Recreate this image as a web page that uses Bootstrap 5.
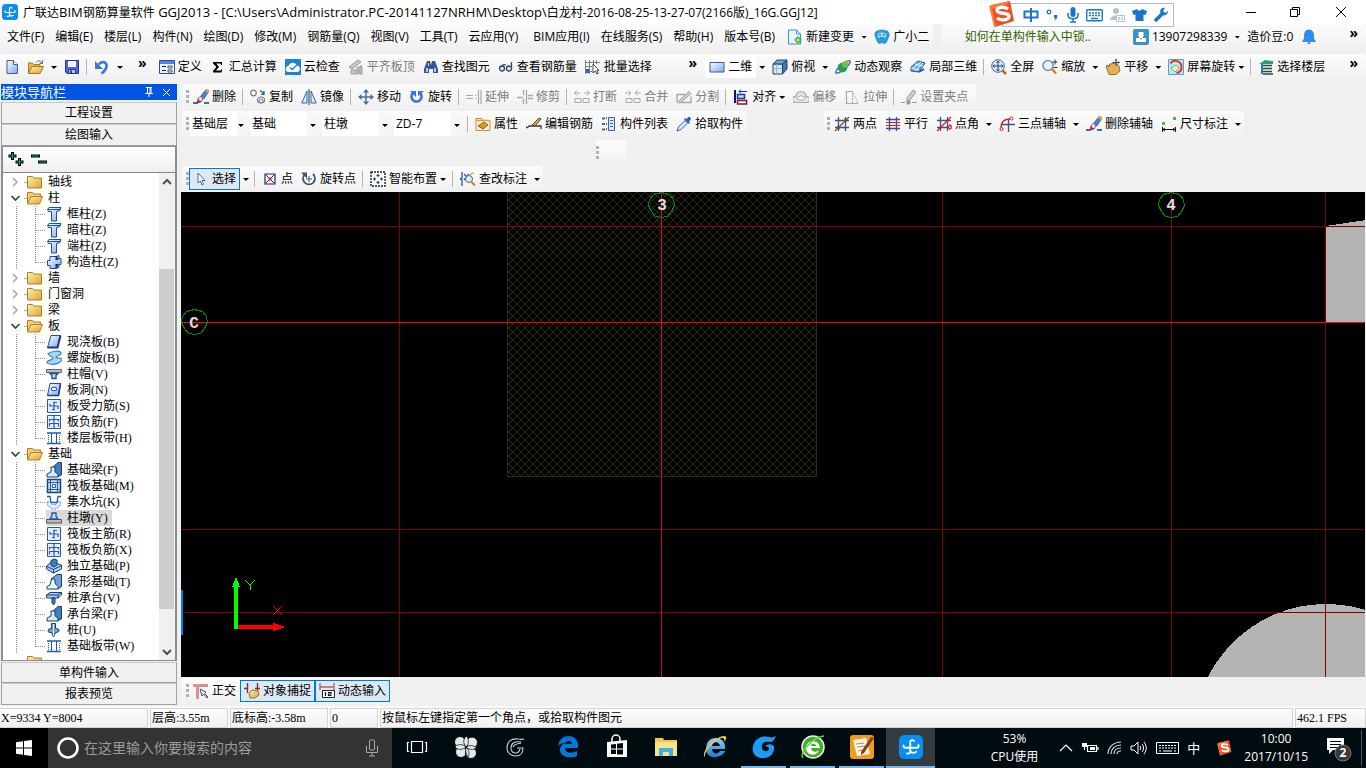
<!DOCTYPE html>
<html lang="zh-CN">
<head>
<meta charset="utf-8">
<meta name="viewport" content="width=device-width, initial-scale=1">
<title>广联达BIM钢筋算量软件 GGJ2013</title>
<link href="https://cdn.jsdelivr.net/npm/bootstrap@5.3.0/dist/css/bootstrap.min.css" rel="stylesheet">
<style>
  body { font: 12px/16px "Open Sans", "Noto Sans CJK SC", sans-serif; color: #000; background: #f0f0f0; }
  button, select, input { font: inherit; color: inherit; }
  a { color: inherit; text-decoration: none; }
  svg { flex: none; display: block; }
  .ic { width: 16px; height: 16px; }
  .titlebar { height: 24px; background: #fff; padding-left: 2px; gap: 5px; }
  .caption { font-size: 13px; }
  .caption .han, .caption .path { font-size: 12px; }
  .winbtn { width: 46px; height: 24px; border: 0; background: none; padding: 0; }
  .ime { top: 3px; right: 192px; width: 172px; height: 24px; background: #fff; border: 1px solid #a9bcd8; padding: 0 4px 0 20px; z-index: 5; }
  .ime-logo { left: -16px; top: -4px; }
  .menurow { height: 31px; }
  .menus { gap: 11px; padding-left: 7px; }
  .strip { height: 26px; background: linear-gradient(#fcfcfc, #f0f0f0); border-radius: 3px 3px 0 0; }
  .strip.side { padding-left: 4px; }
  .tb { border: 0; background: none; padding: 0 4px; height: 22px; display: inline-flex; align-items: center; gap: 3px; white-space: nowrap; }
  .tb:disabled { color: #7d7d7d; }
  .tb.on { background: #dce9f5; border: 1px solid #0078d7; padding: 0 3px; }
  .dd { width: 12px; padding: 0; justify-content: center; }
  .tri { width: 6px; height: 3px; background: #000; clip-path: polygon(0 0, 100% 0, 50% 100%); flex: none; }
  .vr1 { width: 1px; height: 16px; margin: 0 3px 0 2px; background: #b4b4b4; flex: none; }
  .grip { width: 3px; height: 14px; background: repeating-linear-gradient(#b0b0b0 0 3px, transparent 3px 5px); flex: none; }
  .more { border: 0; background: none; padding: 0 8px 8px 4px; font-size: 14px; font-weight: 700; line-height: 14px; }
  .combo { appearance: none; border: 0; border-radius: 0; height: 23px; width: 69px; padding: 0 2px; background: linear-gradient(90deg, #fff 83%, #f6f6f6 83%); }
  .combo.first { width: 57px; }
  .combo-wrap { margin-left: 3px; position: relative; }
  .combo-wrap.lead0 { margin-left: 1px; }
  .combo-wrap .tri { position: absolute; right: 3px; top: 11px; pointer-events: none; }
  .row-combo { margin-top: 1px; max-width: 1062px; }
  .row-combo .strip:last-child { padding-left: 3px; }
  .row-blank { margin-top: 3px; padding-left: 35%; }
  .row-blank .strip { width: 31px; }
  .row-snap { padding: 1px 0 2px 1px; }
  .dock { width: 178px; padding: 0 1px; }
  .dock-head { height: 16px; background: #0055e5; color: #fff; font-size: 13px; line-height: 16px; margin-bottom: 2px; }
  .dock-head button { border: 0; background: none; padding: 0; width: 18px; height: 16px; }
  .navbtn { height: 22px; border: 1px solid #a0a0a0; border-top-color: #c8c8c8; background: #f1f1f1; padding: 0; width: 100%; display: block; line-height: 18px; }
  .navbtn.last { margin-bottom: 1px; }
  .treebox { border: 1px solid #8c8c94; border-width: 1px 2px; margin-bottom: 1px; }
  .shrinkable { min-height: 0; }
  .treetools { height: 27px; padding-left: 5px; gap: 7px; background: linear-gradient(#fff, #efefef); border-bottom: 1px solid #828790; }
  .treetools button { border: 0; background: none; padding: 0; }
  .tree { background: #fff; min-height: 0; overflow: hidden; padding-top: 1px; font-family: "Liberation Serif", "Noto Sans CJK SC", serif; }
  .tree li { height: 16px; display: flex; align-items: center; white-space: nowrap; }
  .tree .g { width: 43px; height: 16px; }
  .tree .g1 { width: 24px; height: 16px; }
  .tree .lab { padding: 0 4px 0 5px; }
  .tree .sel { background: #d9d9d9; display: flex; }
  .tree .leaf { display: flex; }
  .sbar { width: 16px; background: #f0f0f0; padding-top: 1px; }
  .sbar button { border: 0; padding: 0; background: none; height: 16px; width: 16px; }
  .thumb { background: #cdcdcd; flex: 338; width: 15px; }
  .spacer { flex: 79; } .spacer.end { flex: 35; }
  .toolrows { padding-left: 1px; }
  .work { min-width: 0; min-height: 0; padding: 0 1px 0 3px; }
  .view { background: #000; min-height: 0; }
  .status { height: 22px; background: #fafafa; padding-top: 2px; gap: 2px; font-family: "Liberation Serif", "Noto Sans CJK SC", serif; }
  .cell { border: 1px solid #d4d4d4; background: linear-gradient(#fdfdfd, #f0f0f0); height: 20px; line-height: 18px; padding-left: 1px; white-space: nowrap; }
  .c1 { width: 148px; border-left: 0; } .c2 { width: 78px; } .c3 { width: 98px; } .c4 { width: 48px; } .c6 { width: 71px; }
  .taskbar { height: 40px; background: #010c10; color: #fff; }
  .startbtn { width: 48px; background: #000; border: 0; padding: 0; display: flex; align-items: center; justify-content: center; }
  .find { width: 344px; background: #333; padding: 0 13px 0 8px; gap: 4px; }
  .find input { border: 0; background: none; font-size: 14px; min-width: 0; outline: 0; padding: 0; }
  .find input::placeholder { color: #9b9b9b; opacity: 1; }
  .app { border: 0; background: none; width: 49px; padding: 0; height: 40px; display: flex; align-items: center; justify-content: center; border-bottom: 2px solid transparent; }
  .app svg { width: 26px; height: 26px; }
  .app.run { border-image: linear-gradient(90deg, transparent 4px, #76b9ed 4px calc(100% - 4px), transparent 0) 2; border-width: 0 0 2px; border-style: solid; }
  .app.cur { background: #343c3f; border-bottom-color: #76b9ed; }
  .tray { line-height: 18px; }
  .tray button { border: 0; background: none; padding: 0; color: #fff; }
  .lang { font-size: 13px; }
  .cpu { margin-right: 12px; }
  .ask { width: 188px; padding-right: 14px; color: #2f6400; }
</style>
</head>
<body class="d-flex flex-column vh-100 overflow-hidden">

<svg width="0" height="0" class="position-absolute" aria-hidden="true">
  <defs>
    <linearGradient id="gb" x1="0" y1="0" x2="1" y2="1"><stop offset="0" stop-color="#fff"/><stop offset="1" stop-color="#7fa6ea"/></linearGradient>
    <linearGradient id="gy" x1="0" y1="0" x2="1" y2="1"><stop offset="0" stop-color="#ffefb0"/><stop offset="1" stop-color="#d9a52e"/></linearGradient>
    <linearGradient id="ie" x1="0" y1="0" x2="0" y2="1"><stop offset="0" stop-color="#8fd4ff"/><stop offset="1" stop-color="#1b7ad0"/></linearGradient>
  </defs>
  <symbol id="app" viewBox="0 0 16 16"><rect width="16" height="16" rx="3.500" fill="#0a8ef0"/><path d="M7.500 4.200v6.800c0 1.300-1.500 1.900-2.600 1M7.500 4.200c.6-1 2.200-1 2.700.2M3.200 6.500c-.6 1.200 0 2 1.300 2h7.300c1.500 0 1.800-1.500.7-2.200M7.600 10.800c.6 1.500 3 1.600 4.200 0" fill="none" stroke="#fff" stroke-width="1.200"/></symbol>
  <symbol id="new" viewBox="0 0 16 16"><path d="M3 1.500h6.500l4 4v9H3z" fill="url(#gb)" stroke="#4a5f86"/><path d="M9.500 1.500v4h4" fill="#fff" stroke="#4a5f86"/></symbol>
  <symbol id="open" viewBox="0 0 16 16"><path d="M.5 14V4h4l1.500 1.500h6V8" fill="#e9b740" stroke="#a57a1b"/><path d="M.5 14.500L4 7.500h11.500l-3.500 7z" fill="url(#gy)" stroke="#a57a1b"/><path d="M8 3.500c2-2.500 4.500-2 6 .5M14.500 1.500V4.500h-3" fill="none" stroke="#667"/></symbol>
  <symbol id="save" viewBox="0 0 16 16"><path d="M1.500 1.500h13v13H3l-1.500-1.500z" fill="#5365d8" stroke="#27338c"/><path d="M4 2h8v6H4z" fill="#f4f4ff"/><path d="M4.500 10.500h7v4h-7z" fill="#bcc" stroke="#27338c"/><path d="M6 11.500h2v3H6z" fill="#27338c"/></symbol>
  <symbol id="undo" viewBox="0 0 16 16"><path d="M4.500 5.500C8 1.500 13 3 12.500 7.500c-.4 3-2.500 5-5 7" fill="none" stroke="#3f78d4" stroke-width="2.600"/><path d="M1 2v8h8z" fill="#3f78d4"/></symbol>
  <symbol id="define" viewBox="0 0 16 16"><path d="M.5 1.500h15v13H.5z" fill="#e8f1ff" stroke="#35507f"/><path d="M1 2h14v3H1z" fill="#4a86e8"/><path d="M3 7.500h4M3 11.500h4" stroke="#222"/><path d="M9 7h4v2H9zM9 11h4v2H9z" fill="#fff" stroke="#456"/></symbol>
  <symbol id="sum" viewBox="0 0 16 16"><path d="M3 3h9v3h-1l-.6-1.500H6.200L9 8l-3.200 3.600h5L11.400 10H12l-.3 3.500H3V12l3.400-4L3 4.500z"/></symbol>
  <symbol id="cloud" viewBox="0 0 16 16"><path d="M0 0h16v16H0z" fill="#1b83cf"/><path d="M4 13a3 3 0 0 1-.5-6A4.500 4.500 0 0 1 12 6.500a3.300 3.300 0 0 1 .3 6.500z" fill="#fff"/><path d="M5 8.500l2.200 2L12 6" fill="none" stroke="#1b83cf" stroke-width="1.500"/></symbol>
  <symbol id="flat" viewBox="0 0 16 16"><path d="M1 8l9-7 3 2-9 7zM3 11h5v4H3zM9 8h2v7H9zM12 7h2v8h-2z" fill="#c9c9c9" stroke="#9a9a9a"/></symbol>
  <symbol id="bino" viewBox="0 0 16 16"><path d="M4 2h3l1 4 1-4h3l3 8v4h-5v-4H6v4H1v-4z" fill="#36588f"/><path d="M3 9h2v4H3zM11 9h2v4h-2zM5 4h1v3H5z" fill="#b7cdf0"/></symbol>
  <symbol id="glass" viewBox="0 0 16 16"><path d="M13.500 3v7M3 8c1-2 3-3 5-2" stroke="#334a5c" fill="none" stroke-width="1.300"/><circle cx="4" cy="9.500" r="2.500" fill="#dfe8f0" stroke="#334a5c" stroke-width="1.300"/><circle cx="11" cy="9.500" r="2.500" fill="#dfe8f0" stroke="#334a5c" stroke-width="1.300"/></symbol>
  <symbol id="batch" viewBox="0 0 16 16"><path d="M.5 1v14M4.500 1v14M8.500 1v5M11.500 1v4M1 3.500h14M1 7.500h6M1 12.500h6" stroke="#71819a" fill="none"/><path d="M1 10h3v4H1z" fill="#2b57c9"/><path d="M8 5v9l2.300-2 1.500 3 1.500-.8-1.500-2.800H14z" fill="#fff" stroke="#445"/></symbol>
  <symbol id="two" viewBox="0 0 16 16"><path d="M1 3.500h14v9.500H1z" fill="url(#gb)" stroke="#2e59c0"/></symbol>
  <symbol id="cube" viewBox="0 0 16 16"><path d="M1 5h9.500v10H1z" fill="#d3e9fa" stroke="#24405e"/><path d="M1 5l4-4h10l-4.500 4z" fill="#6ba6d6" stroke="#24405e"/><path d="M10.500 5L15 1v9l-4.500 5z" fill="#3f78ad" stroke="#24405e"/><path d="M4.500 5v10M1 9.500h9" stroke="#8fb5d6"/></symbol>
  <symbol id="orbit" viewBox="0 0 16 16"><path d="M1 14c-2-3 12-14 14-12s-9 13-14 12z" fill="none" stroke="#2b6bb8" stroke-width="1.400"/><circle cx="7.500" cy="8.500" r="4.800" fill="#2f9a4b"/><circle cx="10" cy="5.500" r="3.200" fill="#5fc168"/><path d="M10 1l5 3-4 1z" fill="#d2a21e"/></symbol>
  <symbol id="local3" viewBox="0 0 16 16"><path d="M1 8l7-6 7 2-6 9-8-1z" fill="#6ea8e0" stroke="#26588e"/><path d="M3 9l8-6M5 12l8-8M1 9l8 2M5 5l8 2" stroke="#eaf5ff"/><path d="M9 13l5-3" stroke="#26588e" stroke-width="2"/></symbol>
  <symbol id="full" viewBox="0 0 16 16"><circle cx="7" cy="7" r="6.300" fill="#dfeaf8" stroke="#43618e"/><path d="M7 2v10M2 7h10M5.500 3.500L7 2l1.500 1.500M5.500 10.500L7 12l1.500-1.500M3.500 5.500L2 7l1.500 1.500M10.500 5.500L12 7l-1.500 1.500" fill="none" stroke="#1f3f77"/><path d="M11.500 11.500L15 15" stroke="#b06b22" stroke-width="2.500"/></symbol>
  <symbol id="zoom" viewBox="0 0 16 16"><circle cx="6" cy="6.500" r="5" fill="#eaf2fa" stroke="#7b8ea8" stroke-width="1.500"/><path d="M10 10l4 4.500" stroke="#c98427" stroke-width="2.500"/><path d="M10.500 3h5M13 .5v5M11.500 8.500h4" stroke="#234"/></symbol>
  <symbol id="pan" viewBox="0 0 16 16"><path d="M1 7l2-1 1 2 1-3 6-1 3 3 1 5-4 3.500H4z" fill="#dfb257" stroke="#9a7322"/><path d="M11 0v7M7.500 3.500h7M10 1.500L11 .5l1 1M13.500 2.500l1 1-1 1" stroke="#345" fill="none"/></symbol>
  <symbol id="rot" viewBox="0 0 16 16"><path d="M.5.500h15v15H.5z" fill="#bfe6f7" stroke="#4aa6d0"/><path d="M2.500 4.500c3-4.500 11-3 11 3.500 0 3.500-2 5.500-5 6" fill="none" stroke="#e03030" stroke-width="2"/><path d="M3 9l5-3 3 3-4 4z" fill="#f6f0c0" stroke="#6b6"/></symbol>
  <symbol id="floor" viewBox="0 0 16 16"><path d="M1 5l6-4 8 1v3z" fill="#2e9e70"/><path d="M3 6.500h11M3 9.500h11M3 12.500h11M5 15h10" stroke="#1f4f4a" stroke-width="1.500"/><path d="M4 5v10" stroke="#2f7d9a" stroke-width="2"/></symbol>
  <symbol id="brush" viewBox="0 0 16 16"><path d="M0 14h5M11 14h5" stroke="#426a94" stroke-width="2"/><path d="M7 8l6-7.500L16 2l-5 8z" fill="#4a7fd0" stroke="#2d4b80" stroke-width=".6"/><path d="M12 2l3.500-2v4.500z" fill="#e5a72f"/><path d="M4 13c0-3 2-6 4-5l2 1.500c0 3-3 5-6 4.500z" fill="#a02c50"/><circle cx="7.500" cy="10" r="1.900" fill="#f0d8e8"/></symbol>
  <symbol id="copy" viewBox="0 0 16 16"><circle cx="3.500" cy="4" r="2.800" fill="none" stroke="#6b7b8c" stroke-width="1.200"/><ellipse cx="11" cy="11" rx="3.500" ry="3" fill="none" stroke="#6b7b8c" stroke-width="1.200"/><circle cx="11" cy="12" r="2" fill="none" stroke="#6b7b8c"/><path d="M10 1.500l4 3.500M14 2v3.500h-3" fill="none" stroke="#2b5287" stroke-width="1.200"/></symbol>
  <symbol id="mirror" viewBox="0 0 16 16"><path d="M6 2v12H.8zM10 2v12h5.200z" fill="#dfeafa" stroke="#3765a8"/><path d="M8 0v16" stroke="#234"/></symbol>
  <symbol id="move" viewBox="0 0 16 16"><path d="M8 2v12M2 8h12" stroke="#4b6f91" stroke-width="1.500"/><path d="M8 0l3 3.500H5zM8 16l3-3.500H5zM0 8l3.500-3v6zM16 8l-3.500-3v6z" fill="#4b6f91"/></symbol>
  <symbol id="turn" viewBox="0 0 16 16"><path d="M4 4a5 5 0 1 0 7 0" fill="none" stroke="#3d74d2" stroke-width="2.600"/><path d="M1 2h6v6zM9 2h6L9 7z" fill="#3d74d2"/></symbol>
  <symbol id="ext" viewBox="0 0 16 16"><path d="M0 6.500h7M0 9.500h7M9 6.500h1.500M9 9.500h1.500M12.500 1v14M15 1v14" stroke="#a9a9a9" stroke-width="1.200"/></symbol>
  <symbol id="trim" viewBox="0 0 16 16"><path d="M0 8.500h6M6.500 1v5M6.500 10v5M9.500 1v14M11 6.500h5M11 9.500h5" stroke="#a9a9a9" stroke-width="1.300"/></symbol>
  <symbol id="brk" viewBox="0 0 16 16"><path d="M0 4h6M3 1.500L.5 4 3 6.500M10 4h6M13 1.500L15.500 4 13 6.500M1 9.500h6v4H1zM9 9.500h6v4H9z" fill="none" stroke="#a9a9a9"/></symbol>
  <symbol id="mrg" viewBox="0 0 16 16"><path d="M0 4h6M3.500 1.500L6 4 3.500 6.500M10 4h6M12.500 1.500L10 4l2.500 2.500M1 9.500h6v4H1zM9 9.500h6v4H9z" fill="none" stroke="#a9a9a9"/></symbol>
  <symbol id="split" viewBox="0 0 16 16"><path d="M1 5.500h8M1 13.500h14v-6M3 12L14 2M1 5v8M5 13L15 4" fill="none" stroke="#a9a9a9" stroke-width="1.400"/></symbol>
  <symbol id="align" viewBox="0 0 16 16"><path d="M2 1v13" stroke="#11185c" stroke-width="2"/><path d="M4.500 5.500h7v4h-7z" fill="#cfe0ff" stroke="#1334b5" stroke-width="1.500"/><path d="M4.500 11.500h9V15h-9z" fill="#fff" stroke="#8c1420" stroke-width="1.500"/><path d="M6 2.500h8M8 .5l-2 2 2 2" stroke="#1334b5" fill="none"/></symbol>
  <symbol id="off" viewBox="0 0 16 16"><path d="M2 13.500a3 3 0 0 1 1-6 5 5 0 0 1 10 0 3 3 0 0 1 1 6z" fill="#e5e5e5" stroke="#a9a9a9" stroke-width="1.200"/><path d="M5.500 11a1.500 1.500 0 0 1 .5-3 2.200 2.200 0 0 1 4 0 1.500 1.500 0 0 1 .5 3z" fill="#fff" stroke="#a9a9a9"/></symbol>
  <symbol id="str" viewBox="0 0 16 16"><path d="M9 2.500H2.500v12H14" fill="none" stroke="#a9a9a9" stroke-width="1.200"/><path d="M8.500 3v11M9 4l5 10" stroke="#a9a9a9" stroke-dasharray="2 1"/></symbol>
  <symbol id="grip" viewBox="0 0 16 16"><path d="M6 9l6-8 3 2-6 8-3 1z" fill="#ccc" stroke="#999"/><path d="M0 13.500h4M6 12h3v3H6zM11 13.500h5" stroke="#999" fill="#999"/></symbol>
  <symbol id="prop" viewBox="0 0 16 16"><path d="M1 2.500h6l1.500 2H15v10H1z" fill="#fdf3dc" stroke="#cf8a3a"/><path d="M3 10l6-4 4 3-5 4z" fill="#d59b28" stroke="#8e6214"/><path d="M1 4.500h14" stroke="#e39b45" stroke-width="1.500"/></symbol>
  <symbol id="erebar" viewBox="0 0 16 16"><path d="M0 10.500c1 2 2 1 3-.5h12v3" fill="none" stroke="#333" stroke-width="1.300"/><path d="M6 9l7-7 2 1-6 7z" fill="#d9a45b" stroke="#5b4630"/></symbol>
  <symbol id="list" viewBox="0 0 16 16"><path d="M1 2.500h3M1 8h3M1 13.500h3M5 2h1M5 8h1M5 13h1" stroke="#3e6b93" stroke-width="2"/><path d="M7.500 1.500h6v13h-6z" fill="#dce9fb" stroke="#3c5ea5"/><path d="M9 4.500h3M9 7.500h3M9 10.500h3" stroke="#3c5ea5"/></symbol>
  <symbol id="pick" viewBox="0 0 16 16"><path d="M1 15l1.500-4L9 4.500l2.500 2.500L5 13.500z" fill="#dff0fb" stroke="#2e5c93"/><path d="M8 3l5 5 1-1-1-1.500c3-2 2-5-.5-4.500l-2 2L9 2z" fill="#2166b4"/></symbol>
  <symbol id="hash" viewBox="0 0 16 16"><path d="M1 4.500h14M1 11.500h14M4.500 1v14M11.500 1v14" stroke="#3f4d8c" stroke-width="1.300"/></symbol>
  <symbol id="tp" viewBox="0 0 16 16"><use href="#hash"/><path d="M1 15L15 1" stroke="#c22" stroke-width="1.200"/><circle cx="11.500" cy="4.500" r="1.800" fill="#2f7a1f"/><circle cx="4.500" cy="11.500" r="1.800" fill="#2f7a1f"/></symbol>
  <symbol id="par" viewBox="0 0 16 16"><path d="M4.500 1v14M11.500 1v14M1 3.500h14M1 12.500h14" stroke="#3f4d8c" stroke-width="1.300"/><path d="M1 6.500h14M1 9.500h14" stroke="#c22"/></symbol>
  <symbol id="pa" viewBox="0 0 16 16"><use href="#hash"/><path d="M1 15L15 1" stroke="#c22" stroke-width="1.300"/><ellipse cx="14" cy="11" rx="1.300" ry="2" fill="#fff" stroke="#c22" stroke-width="1.300"/></symbol>
  <symbol id="arc3" viewBox="0 0 16 16"><path d="M3 8.500h13M9.500 4v12" stroke="#3f4d8c" stroke-width="1.300"/><path d="M2 12c0-6 3-9 9-9" fill="none" stroke="#c22" stroke-width="1.300"/><circle cx="2.500" cy="13" r="1.500" fill="#fff" stroke="#c22"/><circle cx="12.500" cy="2.500" r="1.500" fill="#fff" stroke="#c22"/></symbol>
  <symbol id="dim" viewBox="0 0 16 16"><path d="M1 6h3v3H1zM12 1h3v3h-3z" fill="#4eb354"/><path d="M1.500 11v5M14.500 11v5M2 13.500h12M4 12l-2 1.500L4 15M12 12l2 1.500-2 1.500" stroke="#111" fill="none"/></symbol>
  <symbol id="arrow" viewBox="0 0 16 16"><path d="M5 2v10l2.300-2 1.700 4 1.500-.7L9 9.500h3z" fill="#fff" stroke="#556b85"/></symbol>
  <symbol id="pt" viewBox="0 0 16 16"><path d="M3 3h10v10H3z" fill="#fff" stroke="#1b2a6b" stroke-width="1.200"/><path d="M4 4l8 8M12 4l-8 8" stroke="#1b2a6b"/><path d="M6.500 6.500h3v3h-3z" fill="#c33"/></symbol>
  <symbol id="rpt" viewBox="0 0 16 16"><path d="M4 3a6 6 0 1 0 8 0" fill="none" stroke="#3b5877" stroke-width="1.800"/><path d="M0 1.500h6v6z" fill="#3b5877"/><path d="M8 5v6M5 8h6" stroke="#3b5877"/></symbol>
  <symbol id="smart" viewBox="0 0 16 16"><path d="M1 1h14v14H1z" fill="#fff" stroke="#222" stroke-dasharray="2 1" stroke-width="1.400"/><path d="M8 3v3M6.500 4.500h3M8 10v3M6.500 11.500h3M4.500 6.500v3M3 8h3M11.500 6.500v3M10 8h3" stroke="#1b3a6b" stroke-width="1.200"/></symbol>
  <symbol id="chk" viewBox="0 0 16 16"><path d="M2 1v6l-2 1 2 1v6M4 3l6 6M4 9l5-6" stroke="#2456b5" fill="none" stroke-width="1.300"/><circle cx="9" cy="8" r="3.500" fill="#e3edf7" stroke="#567"/><path d="M11.500 11l3.500 3.500" stroke="#c98427" stroke-width="2"/><path d="M9 4l4-3 1 1-4 3z" fill="#d9a45b"/></symbol>
  <symbol id="ortho" viewBox="0 0 16 16"><path d="M0 1h15v3H6v12H3V4H0z" fill="#d99090"/><path d="M7 6l2 7 1.500-2 3.500 4 1-1-3.500-3.500L13 9z" fill="#e8eef5" stroke="#456"/></symbol>
  <symbol id="snap" viewBox="0 0 16 16"><path d="M3.500 0v10M13.500 0v9M0 5.500h4M11 5.500h5" stroke="#7c2d3a" fill="none" stroke-width="1.400"/><path d="M5 10l3-3 6 1 1 4-4 3H6z" fill="url(#gy)" stroke="#9a7322"/></symbol>
  <symbol id="dyn" viewBox="0 0 16 16"><path d="M1 4h14M1 0v7M15 0v7" stroke="#b26464" stroke-width="1.400"/><path d="M3.500 7.500h12v7h-12z" fill="#fff" stroke="#223"/><path d="M6.500 9v4M9 9.500h3v1.500H9.500v1.500H12.500" stroke="#111" fill="none" stroke-width="1.200"/></symbol>
  <symbol id="newchg" viewBox="0 0 16 16"><path d="M1.500 1h8l4 4v10h-12z" fill="#eaf7ff" stroke="#3795c4"/><path d="M9.500 1v4h4" fill="none" stroke="#3795c4"/><path d="M7 11l4-4 4 4-4 4z" fill="#40a320"/><path d="M11 8.500v5M8.500 11h5" stroke="#d8f5c8"/></symbol>
  <symbol id="mascot" viewBox="0 0 16 16"><path d="M2 2c4-2 8-2 12 0 2 3 2 5 1 6l-2 5-2 2-3-1-3 1-2-2L1 8C0 6 0 4 2 2z" fill="#2a9de0"/><ellipse cx="8" cy="6.500" rx="4.300" ry="3" fill="#9fdcf8"/><path d="M6 5v2M10 5v2M6 8.500c1 .8 3 .8 4 0" stroke="#0d4f86" fill="none"/></symbol>
  <symbol id="user" viewBox="0 0 16 16"><rect width="16" height="16" rx="2" fill="#3a92cc"/><path d="M5.500 3h5v4L9.500 9h3.500v4H3V9h3.500L5.500 7z" fill="#fff"/><path d="M7 9l1 2 1-2" fill="#3a92cc"/></symbol>
  <symbol id="bell" viewBox="0 0 16 16"><path d="M8 1c3 0 4.500 2 4.500 5v3.500l2 3h-13l2-3V6C3.500 3 5 1 8 1z" fill="#2a8cf5" stroke="#1b67bf" stroke-width=".6"/><path d="M6 13.500h4L8 15.500z" fill="#1b67bf"/></symbol>
  <symbol id="fold" viewBox="0 0 16 16"><path d="M.5 2.500h5l1.500 1.500h7.500v10H.5z" fill="url(#gy)" stroke="#ad8129"/></symbol>
  <symbol id="foldo" viewBox="0 0 16 16"><path d="M.5 14V2.500h5L7 4h6.500v2.500" fill="#f5cf6a" stroke="#ad8129"/><path d="M.5 14L4 6.500h11.500L12.500 14z" fill="url(#gy)" stroke="#ad8129"/></symbol>
  <symbol id="col" viewBox="0 0 16 16"><path d="M1.500 3.500l1.500-2h12l-1 3-3.500 1V15h-5V5.500h-3z" fill="url(#gb)" stroke="#1c4fa8"/><path d="M2 3.500h12" stroke="#1c4fa8"/></symbol>
  <symbol id="gz" viewBox="0 0 16 16"><path d="M4 2.500h6l3-1v3h2v6h-2v3l-3 1H4v-3H1.500v-5H4z" fill="url(#gb)" stroke="#1c4fa8"/><path d="M10.500 2v3h2M10.500 14v-3h2" stroke="#12306b" stroke-width="2" fill="none"/></symbol>
  <symbol id="slab" viewBox="0 0 16 16"><path d="M5 1.500h9.500l-3 12H1.500z" fill="url(#gb)" stroke="#1c4fa8"/><path d="M1.500 13.500h10l3-12" fill="none" stroke="#173c86" stroke-width="2"/></symbol>
  <symbol id="spiral" viewBox="0 0 16 16"><path d="M2 4c3-3 12-4 13-1 1 2-5 3-5 4 0 2 6 0 6 2 0 4-8 6-12 5-2 0-3-1-3-2 1-2 6-2 6-4 0-1-3-1-5-4z" fill="#a8d6f6" stroke="#2f80c8" stroke-width="1.200"/></symbol>
  <symbol id="cap" viewBox="0 0 16 16"><path d="M.5 3.500h15v3H.5z" fill="#bbb" stroke="#666"/><path d="M4 7.500h8l-2 2v3H6v-3z" fill="#cfe0ff" stroke="#1c4fa8" stroke-width="1.400"/></symbol>
  <symbol id="hole" viewBox="0 0 16 16"><path d="M4 1.500h10.500l-2 12h-11z" fill="url(#gb)" stroke="#1c4fa8"/><path d="M1.500 13.500h11l2-12" fill="none" stroke="#173c86" stroke-width="1.500"/><ellipse cx="8" cy="7" rx="2.800" ry="1.800" fill="#fff" stroke="#1c4fa8"/></symbol>
  <symbol id="r1" viewBox="0 0 16 16"><path d="M1.500 1.500h13v13h-13z" fill="#e3edfd" stroke="#2457b8"/><path d="M8 3.500v9M8 4.500h3M4 6v2h8v3M8 11.500H6" fill="none" stroke="#2457b8" stroke-width="1.200"/></symbol>
  <symbol id="r2" viewBox="0 0 16 16"><path d="M1.500 1.500h13v13h-13z" fill="#e8f0fd" stroke="#2457b8"/><path d="M8 2v12M3.500 7.500v-2h9v2M3.500 12.500v-3h9v3" fill="none" stroke="#2457b8" stroke-width="1.200"/></symbol>
  <symbol id="band" viewBox="0 0 16 16"><path d="M1 3h14M1 13.500h14" stroke="#2457b8" stroke-width="1.500"/><path d="M5.500 3v10M10.500 3v10" stroke="#2457b8"/><path d="M2.500 5v8M13.500 5v8" stroke="#2457b8" stroke-dasharray="1 1"/></symbol>
  <symbol id="beam" viewBox="0 0 16 16"><path d="M6 6l6-5.500h3.500V13L11 15z" fill="#3f7cc0" stroke="#163f73"/><path d="M1 15v-3l4-2V5h4v5l3 2v3z" fill="#d6e8fa" stroke="#163f73"/></symbol>
  <symbol id="raft" viewBox="0 0 16 16"><path d="M1.500 1.500h13v13h-13z" fill="#d6e8fa" stroke="#163f73" stroke-width="1.500"/><path d="M4.500 1v14M11.500 1v14M1 4.500h14M1 11.500h14" stroke="#2b5fa8" stroke-width="1.200"/><path d="M6.500 6.500h3v3h-3z" fill="#fff" stroke="#2b5fa8"/></symbol>
  <symbol id="pit" viewBox="0 0 16 16"><path d="M1 8l4-.5 1 3h4l1-3 4 .5-1 4-4 3H6l-4-3z" fill="#e6f0fd" stroke="#5b8bd8" stroke-dasharray="2 1"/><path d="M1 2.500h3l1 6h6l1-6h3" fill="none" stroke="#2457b8" stroke-width="1.300"/></symbol>
  <symbol id="pier" viewBox="0 0 16 16"><path d="M.5 9.500h15v3.500H.5z" fill="#bbb" stroke="#555"/><path d="M4 9l2-3V3h4v3l2 3z" fill="#cfe0ff" stroke="#1c4fa8" stroke-width="1.300"/></symbol>
  <symbol id="indep" viewBox="0 0 16 16"><path d="M.5 8l5-4 10 3v4l-8 4-7-4z" fill="#a9cdf0" stroke="#163f73"/><path d="M5 2.500l3-1.500 3 1v5L8 9 5 7.500z" fill="#3f7cc0" stroke="#163f73"/><path d="M1 8.500l6.500 3 8-4M7.500 11.500V15" stroke="#163f73" fill="none"/></symbol>
  <symbol id="strip" viewBox="0 0 16 16"><path d="M5 5l6-4.500h4.500v12L12 15z" fill="#6f9fd4" stroke="#163f73"/><path d="M1 15v-2.500l3-1.500 1.500-6h3l1 5 2.500 2.500V15z" fill="#eef6ff" stroke="#163f73"/></symbol>
  <symbol id="pilecap" viewBox="0 0 16 16"><path d="M.5 5L4 2.500h11.500V5L12 8H.5z" fill="#a9cdf0" stroke="#163f73"/><path d="M.5 5H12l3.500-2.500M12 5v3" fill="none" stroke="#163f73"/><path d="M6 8v5l1.500 2L9 13V8z" fill="#3f7cc0" stroke="#163f73"/></symbol>
  <symbol id="pile" viewBox="0 0 16 16"><path d="M5.500 1.500h4v5c3 0 4 1 3.500 2.500-.5 1-1.500 1.500-3.500 1.500L7.500 15l-2-4.500C3 10.500 2 10 2 9c0-1.500 1-2.500 3.500-2.500z" fill="#6f9fd4" stroke="#163f73"/><path d="M7.500 2v12" stroke="#dcecfb"/></symbol>
  <symbol id="gm" viewBox="0 0 43 16"><path d="M13.500 0v16M32.500 0v16M33 8.500h10" stroke="#888" stroke-dasharray="1 1" fill="none"/></symbol>
  <symbol id="ge" viewBox="0 0 43 16"><path d="M13.500 0v16M32.500 0v9M33 8.500h10" stroke="#888" stroke-dasharray="1 1" fill="none"/></symbol>
  <symbol id="gc" viewBox="0 0 24 16"><path d="M10 4l4 4-4 4" stroke="#a6a6a6" fill="none" stroke-width="1.500"/><path d="M21 8.500h3" stroke="#888" stroke-dasharray="1 1"/></symbol>
  <symbol id="go" viewBox="0 0 24 16"><path d="M8.500 6l4 4 4-4" stroke="#404040" fill="none" stroke-width="1.700"/><path d="M21 8.500h3" stroke="#888" stroke-dasharray="1 1"/></symbol>
  <symbol id="sogou" viewBox="0 0 28 28"><path d="M4 5l19-4 4 20-19 6z" fill="#f0501e"/><path d="M2 6l20-5-1 3L5 9l4 17-2 1z" fill="#ff7a3c"/><path d="M21 9c-4-3-11-2-11 1.500 0 4 12 1.500 12 5.500 0 4.500-8 5-12 2" fill="none" stroke="#fff" stroke-width="3.400"/></symbol>
</svg>

<header class="titlebar d-flex align-items-center position-relative">
  <svg class="ic"><use href="#app"/></svg>
  <span class="caption text-nowrap"><span class="han">广联达</span>BIM<span class="han">钢筋算量软件</span> GGJ2013 - [C:\Users\Administrator.PC-20141127NRHM\Desktop\<span class="han">白龙村</span><span class="path">-2016-08-25-13-27-07(2166版)_16G.GGJ12]</span></span>
  <div class="ms-auto d-flex">
    <button class="winbtn" aria-label="最小化"><svg width="46" height="20"><path d="M18 10.500h10" stroke="#000"/></svg></button>
    <button class="winbtn" aria-label="还原"><svg width="46" height="20"><path d="M16.500 7.500h7v7h-7zM18.500 7.500v-2h7v7h-2" fill="none" stroke="#000"/></svg></button>
    <button class="winbtn" aria-label="关闭"><svg width="46" height="20"><path d="M16 5l10 10M26 5L16 15" stroke="#000"/></svg></button>
  </div>
  <div class="ime position-absolute d-flex align-items-center justify-content-between">
    <svg class="ime-logo position-absolute" width="28" height="28"><use href="#sogou"/></svg>
    <svg width="16" height="16"><path d="M1.500 4.500h13v6h-13zM8 1v14" fill="none" stroke="#1a75cc" stroke-width="2"/></svg>
    <svg width="14" height="16"><circle cx="4" cy="5" r="1.800" fill="none" stroke="#1a75cc" stroke-width="1.300"/><path d="M9 8h3c1 3-1 5-3 5 1-1 1.500-1 1-2H9z" fill="#1a75cc"/></svg>
    <svg width="14" height="16"><rect x="4.500" width="5" height="10" rx="2.500" fill="#1a75cc"/><path d="M2 6v2c0 5 10 5 10 0V6M7 11v4M4 15h6" fill="none" stroke="#1a75cc" stroke-width="1.500"/></svg>
    <svg width="17" height="16"><rect x=".7" y="2.700" width="15.600" height="11" rx="1" fill="none" stroke="#1a75cc" stroke-width="1.400"/><path d="M3 6h11M3 8.500h11" stroke="#1a75cc" stroke-dasharray="2 1" stroke-width="1.500"/><path d="M5 11.500h7" stroke="#1a75cc" stroke-width="1.500"/></svg>
    <svg width="16" height="16"><circle cx="7" cy="4" r="3" fill="#b4c3dc"/><path d="M1 13c0-6 12-6 12 0z" fill="#b4c3dc"/><path d="M7.500 8.500h8v6h-8z" fill="#fff" stroke="#b4c3dc"/><path d="M10 10v3M13 10v3" stroke="#8fa4c6"/></svg>
    <svg width="15" height="16"><path d="M5 2c1 2 4 2 5 0l5 2-1.500 4-2-.5V14h-8V7.500l-2 .5L0 4z" fill="#1a75cc"/></svg>
    <svg width="16" height="16"><path d="M2 14L9 7" stroke="#1a75cc" stroke-width="3.500"/><path d="M15 4l-3 2-2-2 2-3c-4-1-6 3-4 6 3 3 7 1 7-3z" fill="#1a75cc"/></svg>
  </div>
</header>

<nav class="menurow d-flex align-items-start" aria-label="菜单">
  <div class="menus d-flex align-items-center text-nowrap strip bg-transparent">
    <a href="#">文件(F)</a><a href="#">编辑(E)</a><a href="#">楼层(L)</a><a href="#">构件(N)</a><a href="#">绘图(D)</a><a href="#">修改(M)</a><a href="#">钢筋量(Q)</a><a href="#">视图(V)</a><a href="#">工具(T)</a><a href="#">云应用(Y)</a><a href="#" class="ms-1">BIM应用(I)</a><a href="#">在线服务(S)</a><a href="#">帮助(H)</a><a href="#">版本号(B)</a>
  </div>
  <div class="d-flex align-items-center ps-2 strip bg-transparent">
    <button class="tb"><svg class="ic"><use href="#newchg"/></svg>新建变更</button><button class="tb dd" aria-label="更多"><i class="tri"></i></button>
    <button class="tb"><svg class="ic"><use href="#mascot"/></svg>广小二</button>
  </div>
  <div class="strip d-flex align-items-center ms-auto ask justify-content-center"><a href="#">如何在单构件输入中锁..</a></div>
  <div class="strip d-flex align-items-center">
    <button class="tb"><svg class="ic"><use href="#user"/></svg>13907298339</button><button class="tb dd" aria-label="账户"><i class="tri"></i></button>
    <span class="ms-1">造价豆:0</span>
    <button class="tb ms-1" aria-label="通知"><svg class="ic"><use href="#bell"/></svg></button>
    <button class="more ms-4" aria-label="展开">»</button>
  </div>
</nav>

<div class="d-flex pb-1" role="toolbar">
  <div class="strip d-flex align-items-center">
    <button class="tb" aria-label="新建"><svg class="ic"><use href="#new"/></svg></button>
    <button class="tb" aria-label="打开"><svg class="ic"><use href="#open"/></svg></button><button class="tb dd" aria-label="最近"><i class="tri"></i></button>
    <button class="tb" aria-label="保存"><svg class="ic"><use href="#save"/></svg></button><i class="vr1"></i>
    <button class="tb" aria-label="撤销"><svg class="ic"><use href="#undo"/></svg></button><button class="tb dd" aria-label="撤销列表"><i class="tri"></i></button>
    <button class="more ms-2" aria-label="展开">»</button>
  </div>
  <div class="strip d-flex align-items-center flex-fill">
    <button class="tb"><svg class="ic"><use href="#define"/></svg>定义</button>
    <button class="tb"><svg class="ic"><use href="#sum"/></svg>汇总计算</button>
    <button class="tb"><svg class="ic"><use href="#cloud"/></svg>云检查</button>
    <button class="tb" disabled><svg class="ic"><use href="#flat"/></svg>平齐板顶</button>
    <button class="tb"><svg class="ic"><use href="#bino"/></svg>查找图元</button>
    <button class="tb"><svg class="ic"><use href="#glass"/></svg>查看钢筋量</button>
    <button class="tb"><svg class="ic"><use href="#batch"/></svg>批量选择</button>
    <button class="more ms-auto" aria-label="展开">»</button>
  </div>
  <div class="strip d-flex align-items-center">
    <button class="tb bg-white"><svg class="ic"><use href="#two"/></svg>二维</button><button class="tb dd" aria-label="视图模式"><i class="tri"></i></button>
    <button class="tb"><svg class="ic"><use href="#cube"/></svg>俯视</button><button class="tb dd" aria-label="视角"><i class="tri"></i></button>
    <button class="tb"><svg class="ic"><use href="#orbit"/></svg>动态观察</button>
    <button class="tb"><svg class="ic"><use href="#local3"/></svg>局部三维</button><i class="vr1"></i>
    <button class="tb"><svg class="ic"><use href="#full"/></svg>全屏</button>
    <button class="tb"><svg class="ic"><use href="#zoom"/></svg>缩放</button><button class="tb dd" aria-label="缩放选项"><i class="tri"></i></button>
    <button class="tb"><svg class="ic"><use href="#pan"/></svg>平移</button><button class="tb dd" aria-label="平移选项"><i class="tri"></i></button>
    <button class="tb"><svg class="ic"><use href="#rot"/></svg>屏幕旋转<i class="tri"></i></button><i class="vr1"></i>
    <button class="tb"><svg class="ic"><use href="#floor"/></svg>选择楼层</button>
    <button class="more ms-3" aria-label="展开">»</button>
  </div>
</div>

<main class="d-flex flex-fill shrinkable">
  <aside class="dock d-flex flex-column flex-shrink-0">
    <div class="dock-head d-flex align-items-center"><span class="me-auto">模块导航栏</span>
      <button aria-label="固定"><svg width="16" height="16"><path d="M5 3.500h6M6.500 4v5M10 4v5M9 4v5M4 9.500h8M8 10v3" stroke="#fff" fill="none"/></svg></button>
      <button aria-label="关闭"><svg width="16" height="16"><path d="M4 5l7 7M11 5l-7 7" stroke="#fff"/></svg></button>
    </div>
    <button class="navbtn">工程设置</button>
    <button class="navbtn">绘图输入</button>
    <div class="treebox shrinkable d-flex flex-column flex-fill">
      <div class="treetools d-flex align-items-center">
        <button aria-label="展开全部"><svg width="16" height="16"><path d="M4.500 1v8M.5 5h8M11.500 7v8M7.500 11h8" stroke="#000" stroke-width="3"/><path d="M4.500 2v6M1.500 5h6M11.500 8v6M8.500 11h6" stroke="#10a090"/></svg></button>
        <button aria-label="折叠全部"><svg width="17" height="16"><path d="M0 5h9M7 11h9" stroke="#000" stroke-width="3"/><path d="M1 5h7M8 11h7" stroke="#10a090"/></svg></button>
      </div>
      <div class="d-flex flex-fill shrinkable">
        <ul class="tree list-unstyled m-0 flex-fill">
          <li><svg class="g1"><use href="#gc"/></svg><svg class="ic"><use href="#fold"/></svg><span class="lab">轴线</span></li>
          <li><svg class="g1"><use href="#go"/></svg><svg class="ic"><use href="#foldo"/></svg><span class="lab">柱</span></li>
          <li><svg class="g"><use href="#gm"/></svg><span class="leaf"><svg class="ic"><use href="#col"/></svg><span class="lab">框柱(Z)</span></span></li>
          <li><svg class="g"><use href="#gm"/></svg><span class="leaf"><svg class="ic"><use href="#col"/></svg><span class="lab">暗柱(Z)</span></span></li>
          <li><svg class="g"><use href="#gm"/></svg><span class="leaf"><svg class="ic"><use href="#col"/></svg><span class="lab">端柱(Z)</span></span></li>
          <li><svg class="g"><use href="#ge"/></svg><span class="leaf"><svg class="ic"><use href="#gz"/></svg><span class="lab">构造柱(Z)</span></span></li>
          <li><svg class="g1"><use href="#gc"/></svg><svg class="ic"><use href="#fold"/></svg><span class="lab">墙</span></li>
          <li><svg class="g1"><use href="#gc"/></svg><svg class="ic"><use href="#fold"/></svg><span class="lab">门窗洞</span></li>
          <li><svg class="g1"><use href="#gc"/></svg><svg class="ic"><use href="#fold"/></svg><span class="lab">梁</span></li>
          <li><svg class="g1"><use href="#go"/></svg><svg class="ic"><use href="#foldo"/></svg><span class="lab">板</span></li>
          <li><svg class="g"><use href="#gm"/></svg><span class="leaf"><svg class="ic"><use href="#slab"/></svg><span class="lab">现浇板(B)</span></span></li>
          <li><svg class="g"><use href="#gm"/></svg><span class="leaf"><svg class="ic"><use href="#spiral"/></svg><span class="lab">螺旋板(B)</span></span></li>
          <li><svg class="g"><use href="#gm"/></svg><span class="leaf"><svg class="ic"><use href="#cap"/></svg><span class="lab">柱帽(V)</span></span></li>
          <li><svg class="g"><use href="#gm"/></svg><span class="leaf"><svg class="ic"><use href="#hole"/></svg><span class="lab">板洞(N)</span></span></li>
          <li><svg class="g"><use href="#gm"/></svg><span class="leaf"><svg class="ic"><use href="#r1"/></svg><span class="lab">板受力筋(S)</span></span></li>
          <li><svg class="g"><use href="#gm"/></svg><span class="leaf"><svg class="ic"><use href="#r2"/></svg><span class="lab">板负筋(F)</span></span></li>
          <li><svg class="g"><use href="#ge"/></svg><span class="leaf"><svg class="ic"><use href="#band"/></svg><span class="lab">楼层板带(H)</span></span></li>
          <li><svg class="g1"><use href="#go"/></svg><svg class="ic"><use href="#foldo"/></svg><span class="lab">基础</span></li>
          <li><svg class="g"><use href="#gm"/></svg><span class="leaf"><svg class="ic"><use href="#beam"/></svg><span class="lab">基础梁(F)</span></span></li>
          <li><svg class="g"><use href="#gm"/></svg><span class="leaf"><svg class="ic"><use href="#raft"/></svg><span class="lab">筏板基础(M)</span></span></li>
          <li><svg class="g"><use href="#gm"/></svg><span class="leaf"><svg class="ic"><use href="#pit"/></svg><span class="lab">集水坑(K)</span></span></li>
          <li><svg class="g"><use href="#gm"/></svg><span class="leaf sel"><svg class="ic"><use href="#pier"/></svg><span class="lab">柱墩(Y)</span></span></li>
          <li><svg class="g"><use href="#gm"/></svg><span class="leaf"><svg class="ic"><use href="#r1"/></svg><span class="lab">筏板主筋(R)</span></span></li>
          <li><svg class="g"><use href="#gm"/></svg><span class="leaf"><svg class="ic"><use href="#r2"/></svg><span class="lab">筏板负筋(X)</span></span></li>
          <li><svg class="g"><use href="#gm"/></svg><span class="leaf"><svg class="ic"><use href="#indep"/></svg><span class="lab">独立基础(P)</span></span></li>
          <li><svg class="g"><use href="#gm"/></svg><span class="leaf"><svg class="ic"><use href="#strip"/></svg><span class="lab">条形基础(T)</span></span></li>
          <li><svg class="g"><use href="#gm"/></svg><span class="leaf"><svg class="ic"><use href="#pilecap"/></svg><span class="lab">桩承台(V)</span></span></li>
          <li><svg class="g"><use href="#gm"/></svg><span class="leaf"><svg class="ic"><use href="#beam"/></svg><span class="lab">承台梁(F)</span></span></li>
          <li><svg class="g"><use href="#gm"/></svg><span class="leaf"><svg class="ic"><use href="#pile"/></svg><span class="lab">桩(U)</span></span></li>
          <li><svg class="g"><use href="#ge"/></svg><span class="leaf"><svg class="ic"><use href="#band"/></svg><span class="lab">基础板带(W)</span></span></li>
          <li><svg class="g1"></svg><svg class="ic"><use href="#fold"/></svg></li>
        </ul>
        <div class="sbar d-flex flex-column">
          <button aria-label="向上"><svg width="16" height="16"><path d="M4 10l4-4 4 4" stroke="#505050" fill="none" stroke-width="2"/></svg></button>
          <div class="spacer"></div><div class="thumb"></div><div class="spacer end"></div>
          <button aria-label="向下"><svg width="16" height="16"><path d="M4 6l4 4 4-4" stroke="#505050" fill="none" stroke-width="2"/></svg></button>
        </div>
      </div>
    </div>
    <button class="navbtn">单构件输入</button>
    <button class="navbtn last">报表预览</button>
  </aside>

  <section class="work d-flex flex-column flex-fill">
    <div class="toolrows">
      <div class="d-flex">
        <div class="strip side d-flex align-items-center pe-1"><i class="grip"></i>
          <button class="tb"><svg class="ic"><use href="#brush"/></svg>删除</button><i class="vr1"></i>
          <button class="tb"><svg class="ic"><use href="#copy"/></svg>复制</button>
          <button class="tb"><svg class="ic"><use href="#mirror"/></svg>镜像</button><i class="vr1"></i>
          <button class="tb"><svg class="ic"><use href="#move"/></svg>移动</button>
          <button class="tb"><svg class="ic"><use href="#turn"/></svg>旋转</button><i class="vr1"></i>
          <button class="tb" disabled><svg class="ic"><use href="#ext"/></svg>延伸</button>
          <button class="tb" disabled><svg class="ic"><use href="#trim"/></svg>修剪</button><i class="vr1"></i>
          <button class="tb" disabled><svg class="ic"><use href="#brk"/></svg>打断</button>
          <button class="tb" disabled><svg class="ic"><use href="#mrg"/></svg>合并</button>
          <button class="tb" disabled><svg class="ic"><use href="#split"/></svg>分割</button><i class="vr1"></i>
          <button class="tb"><svg class="ic"><use href="#align"/></svg>对齐<i class="tri"></i></button>
          <button class="tb" disabled><svg class="ic"><use href="#off"/></svg>偏移</button>
          <button class="tb" disabled><svg class="ic"><use href="#str"/></svg>拉伸</button><i class="vr1"></i>
          <button class="tb" disabled><svg class="ic"><use href="#grip"/></svg>设置夹点</button>
        </div>
      </div>
      <div class="row-combo d-flex justify-content-between">
        <div class="strip side d-flex align-items-center"><i class="grip"></i>
          <div class="combo-wrap lead0"><select class="combo first" aria-label="楼层"><option>基础层</option></select><i class="tri"></i></div>
          <div class="combo-wrap"><select class="combo" aria-label="构件类型"><option>基础</option></select><i class="tri"></i></div>
          <div class="combo-wrap"><select class="combo" aria-label="构件"><option>柱墩</option></select><i class="tri"></i></div>
          <div class="combo-wrap"><select class="combo" aria-label="构件名称"><option>ZD-7</option></select><i class="tri"></i></div>
          <i class="vr1 ms-1"></i>
          <button class="tb"><svg class="ic"><use href="#prop"/></svg>属性</button>
          <button class="tb"><svg class="ic"><use href="#erebar"/></svg>编辑钢筋</button>
          <button class="tb"><svg class="ic"><use href="#list"/></svg>构件列表</button>
          <button class="tb"><svg class="ic"><use href="#pick"/></svg>拾取构件</button>
        </div>
        <div class="strip d-flex align-items-center"><i class="grip"></i>
          <button class="tb"><svg class="ic"><use href="#tp"/></svg>两点</button>
          <button class="tb"><svg class="ic"><use href="#par"/></svg>平行</button>
          <button class="tb"><svg class="ic"><use href="#pa"/></svg>点角</button><button class="tb dd" aria-label="点角选项"><i class="tri"></i></button>
          <button class="tb"><svg class="ic"><use href="#arc3"/></svg>三点辅轴</button><button class="tb dd" aria-label="辅轴选项"><i class="tri"></i></button>
          <button class="tb"><svg class="ic"><use href="#brush"/></svg>删除辅轴</button>
          <button class="tb"><svg class="ic"><use href="#dim"/></svg>尺寸标注</button><button class="tb dd" aria-label="标注选项"><i class="tri"></i></button>
        </div>
      </div>
      <div class="row-blank d-flex"><div class="strip d-flex align-items-center"><i class="grip"></i></div></div>
      <div class="d-flex">
        <div class="strip side d-flex align-items-center"><i class="grip"></i>
          <button class="tb on"><svg class="ic"><use href="#arrow"/></svg>选择</button><button class="tb dd" aria-label="选择方式"><i class="tri"></i></button><i class="vr1"></i>
          <button class="tb"><svg class="ic"><use href="#pt"/></svg>点</button>
          <button class="tb"><svg class="ic"><use href="#rpt"/></svg>旋转点</button><i class="vr1"></i>
          <button class="tb"><svg class="ic"><use href="#smart"/></svg>智能布置<i class="tri"></i></button><i class="vr1"></i>
          <button class="tb"><svg class="ic"><use href="#chk"/></svg>查改标注</button><button class="tb dd" aria-label="标注方式"><i class="tri"></i></button>
        </div>
      </div>
    </div>

    <div class="view flex-fill overflow-hidden">
      <svg width="100%" height="100%" shape-rendering="crispEdges" role="img" aria-label="绘图区">
        <defs><pattern id="hx" width="8" height="8" patternUnits="userSpaceOnUse"><path d="M0 0l8 8M8 0L0 8" stroke="#2c2c04" fill="none"/></pattern></defs>
        <rect x="326.500" y="-4" width="309" height="288" fill="url(#hx)" stroke="#2c3008"/>
        <path d="M1145 34l40-6v102h-40z" fill="#b4b4b4"/>
        <circle cx="1145" cy="544" r="132" fill="#b4b4b4"/>
        <path d="M218.500 0v485M761.500 0v485M990.500 0v485M1144.500 0v485M0 34.500h1185M0 337.500h1185M0 420.500h1185" stroke="#800000"/>
        <path d="M480.500 0v485" stroke="#c81414"/>
        <path d="M0 130.500h1185" stroke="#f00"/>
        <g fill="none" stroke="#008a00">
          <path id="oct" d="M480.500 0.500l8 2 4 5 1 6-3 6-4 5-6 1-6-1-4-5-3-6 1-6 4-5z"/>
          <use href="#oct" x="510"/><use href="#oct" x="-467" y="117"/>
        </g>
        <g fill="#ddd" font-family="Liberation Mono" font-size="16" font-weight="700" text-anchor="middle"><text x="481" y="18">3</text><text x="990" y="18">4</text><text x="13" y="136">C</text></g>
        <path d="M0 398h2v45H0z" fill="#0078ff"/>
        <path d="M53 437V395h-2l4-10 4 10h-2v42z" fill="#0f0"/>
        <path d="M57 433h35v-2l13 4-13 4v-2H57z" fill="#f00"/>
        <path d="M64 388l5 5 5-5M69 393v5" stroke="#0f0" fill="none"/>
        <path d="M92 414l9 9M101 414l-9 9" stroke="#f00"/>
      </svg>
    </div>

    <div class="d-flex row-snap">
      <div class="strip side d-flex align-items-center"><i class="grip"></i>
        <button class="tb"><svg class="ic"><use href="#ortho"/></svg>正交</button>
        <button class="tb on"><svg class="ic"><use href="#snap"/></svg>对象捕捉</button>
        <button class="tb on"><svg class="ic"><use href="#dyn"/></svg>动态输入</button>
      </div>
    </div>
  </section>
</main>

<footer class="status d-flex">
  <div class="cell c1">X=9334 Y=8004</div><div class="cell c2">层高:3.55m</div><div class="cell c3">底标高:-3.58m</div><div class="cell c4">0</div>
  <div class="cell flex-fill">按鼠标左键指定第一个角点，或拾取构件图元</div><div class="cell c6">462.1 FPS</div>
</footer>

<div class="taskbar d-flex align-items-stretch flex-shrink-0">
  <button class="startbtn" aria-label="开始"><svg width="16" height="16"><path d="M0 2.200l7-1V7.500H0zM8 1.100L16 0v7.500H8zM0 8.500h7v6.300l-7-1zM8 8.500h8V16l-8-1.100z" fill="#fff"/></svg></button>
  <div class="find d-flex align-items-center">
    <svg width="24" height="24"><circle cx="12" cy="12" r="9.500" fill="none" stroke="#fff" stroke-width="2.500"/></svg>
    <input type="text" class="flex-fill" placeholder="在这里输入你要搜索的内容" aria-label="搜索">
    <svg width="14" height="18"><rect x="4.500" y="1" width="5" height="10" rx="1" fill="none" stroke="#aaa"/><path d="M1.500 7v6.500h11V7M7 13v4M4 17h6" fill="none" stroke="#aaa"/></svg>
  </div>
  <button class="app" aria-label="任务视图"><svg viewBox="0 0 26 26"><path d="M7.500 7.500h11v11h-11zM5 8.500H3.500v9H5M21 8.500h1.500v9H21" fill="none" stroke="#fff" stroke-width="1.200"/></svg></button>
  <button class="app" aria-label="风车"><svg viewBox="0 0 26 26"><g fill="#e4e8e8" stroke="#010c10"><circle cx="7" cy="8" r="5.500"/><circle cx="8" cy="18" r="5.500"/><circle cx="18" cy="19" r="5.500"/><circle cx="19" cy="8.500" r="5.500"/></g><path d="M13 2.500c-3 3-3 7 0 10.500 3-3 3-7 1-10.500zM2.500 14c4 2 7 2 10.500-1-3-3-7-3-10.500-1zM13 13c-1 4 0 7 2 10 2-4 1-7-2-10zM13 13c3 3 7 3 10.500 1-3-3-7-3-10.500-1z" fill="#e4e8e8" stroke="#010c10" stroke-width=".7"/></svg></button>
  <button class="app" aria-label="广联达云"><svg viewBox="0 0 26 26"><path d="M22 5c-2 1-4 0-6 0C9 4 5 8 5 14c0 5 4 8 9 8 4 0 7-3 7-8h-6M19 8c-6-1-10 1-10 6 0 3 2 5 5 5 2 0 3-1 4-4M11 13c1-3 4-3 8-4" fill="none" stroke="#ccc" stroke-width="1.100"/></svg></button>
  <button class="app ms-1" aria-label="Edge"><svg viewBox="0 0 26 26"><path d="M3 12C4 5 9 2 14 2c6 0 10 5 9 12H10c0 5 6 6 12 3v5c-7 3-17 1-17-6 0-4 3-6 5-7-4 0-5 1-7 3zM10 10h7c0-4-6-4-7 0z" fill="#0078d7"/></svg></button>
  <button class="app" aria-label="应用商店"><svg viewBox="0 0 26 26"><path d="M8 8V5a4 4 0 0 1 8 0v2" fill="none" stroke="#fff" stroke-width="1.500"/><path d="M3 8l20-2v17H3z" fill="#fff"/><path d="M7 10.500l5-.6v4.500H7zM13 9.800l6-.8v5.400h-6zM7 15.400h5v4.600H7zM13 15.400h6v5h-6z" fill="#010c10"/></svg></button>
  <button class="app" aria-label="文件资源管理器"><svg viewBox="0 0 26 26"><path d="M2 4h8l1 2h13v15H2z" fill="#f3c64c"/><path d="M2 8h22v14H2z" fill="#fde28a"/><path d="M6 22v-8h14v8h-4v-4h-6v4z" fill="#38b4e8"/></svg></button>
  <button class="app" aria-label="Internet Explorer"><svg viewBox="0 0 26 26"><path d="M4 15C4 8 8 4 14 4s10 5 9 11H10c0 5 6 6 8 2h5c-3 8-19 9-19-2zM10 12h8c-1-5-7-5-8 0z" fill="url(#ie)"/><path d="M3 23C-2 20 11 3 22 2c4 0 2 4 0 6 1-4-1-5-5-3C10 9 2 18 3 23z" fill="#f5c73c"/></svg></button>
  <button class="app run" aria-label="广联达"><svg viewBox="0 0 26 26"><path d="M25 2c-2 4-3 6-6 6-5-1-9 1-8 6 1 4 6 4 7 1 0-2-2-3-4-2 1-3 6-4 9-1 1 7-4 12-10 12C5 25 0 19 2 12 4 4 12 1 18 3c3 1 5 0 7-1z" fill="#1c9cf4"/></svg></button>
  <button class="app run" aria-label="浏览器"><svg viewBox="0 0 26 26"><circle cx="13" cy="13" r="11" fill="#42b026" stroke="#eee" stroke-width="1.500"/><path d="M6 14c0-9 14-9 14 0H11c0 4 5 5 8 2-2 7-13 6-13-2zM11 12h5c0-3-5-3-5 0z" fill="#fff"/><path d="M3 24C-1 19 13 3 24 2" fill="none" stroke="#6cd44c" stroke-width="1.500"/></svg></button>
  <button class="app run" aria-label="记事"><svg viewBox="0 0 26 26"><rect x="1" y="1" width="24" height="24" rx="3" fill="#f09a1e"/><path d="M4 6l13-2 4 16-13 2z" fill="#fff6e0"/><path d="M7 10l8-1M8 13l8-1M9 17l5-1" stroke="#a86"/><path d="M12 18L22 3l3 1-10 15-3 2z" fill="#8a3a20"/></svg></button>
  <button class="app cur" aria-label="GGJ2013"><svg><use href="#app" width="24" height="24" x="1" y="1"/></svg></button>

  <div class="tray d-flex align-items-center ms-auto gap-2 text-center">
    <div class="cpu">53%<br>CPU使用</div>
    <button aria-label="显示隐藏图标"><svg width="16" height="16"><path d="M2 11l6-6 6 6" stroke="#fff" fill="none" stroke-width="1.200"/></svg></button>
    <svg width="17" height="16"><path d="M5.500 5.500h9v6h-9zM16 7v3" fill="none" stroke="#fff" stroke-width="1.200"/><path d="M8 7h5v3H8zM0 3h5v4H3v3H2V7H0z" fill="#fff"/></svg>
    <svg width="15" height="16"><path d="M1 14C1 7 7 2 14 2M4 14c0-5 4-9 10-9M7 14c0-4 3-6 7-6M10 14c0-2 2-3 4-3" fill="none" stroke="#ddd" stroke-width="1.200"/></svg>
    <svg width="18" height="16"><path d="M1 6h3l4-4v12l-4-4H1z" fill="none" stroke="#fff"/><path d="M10 6c1 1 1 3 0 4M12 4c2 2 2 6 0 8M14 2c3 4 3 8 0 12" fill="none" stroke="#fff"/></svg>
    <svg width="23" height="16"><path d="M.5 2.500h22v11H.5z" fill="none" stroke="#fff"/><path d="M3 5.500h17M3 8h17" stroke="#fff" stroke-dasharray="2 1"/><path d="M3 11h2M7 11h9M18 11h2" stroke="#fff"/></svg>
    <button class="lang" aria-label="中文输入">中</button>
    <svg class="ms-2" width="16" height="16"><use href="#sogou"/></svg>
    <div class="ms-1">10:00<br>2017/10/15</div>
    <button class="ms-1" aria-label="通知中心"><svg width="46" height="36"><path d="M7 8h17v12H13l-4 4v-4H7z" fill="#fff"/><path d="M10 11.500h11M10 14.500h11M10 17.500h8" stroke="#000"/><circle cx="23" cy="23" r="8" fill="#3a3a3a" stroke="#777"/><text x="23" y="27" fill="#fff" font-size="12" font-weight="700" text-anchor="middle">2</text><path d="M41.500 0v36" stroke="#555"/></svg></button>
  </div>
</div>
<script src="https://cdn.jsdelivr.net/npm/bootstrap@5.3.0/dist/js/bootstrap.bundle.min.js"></script>
</body>
</html>
